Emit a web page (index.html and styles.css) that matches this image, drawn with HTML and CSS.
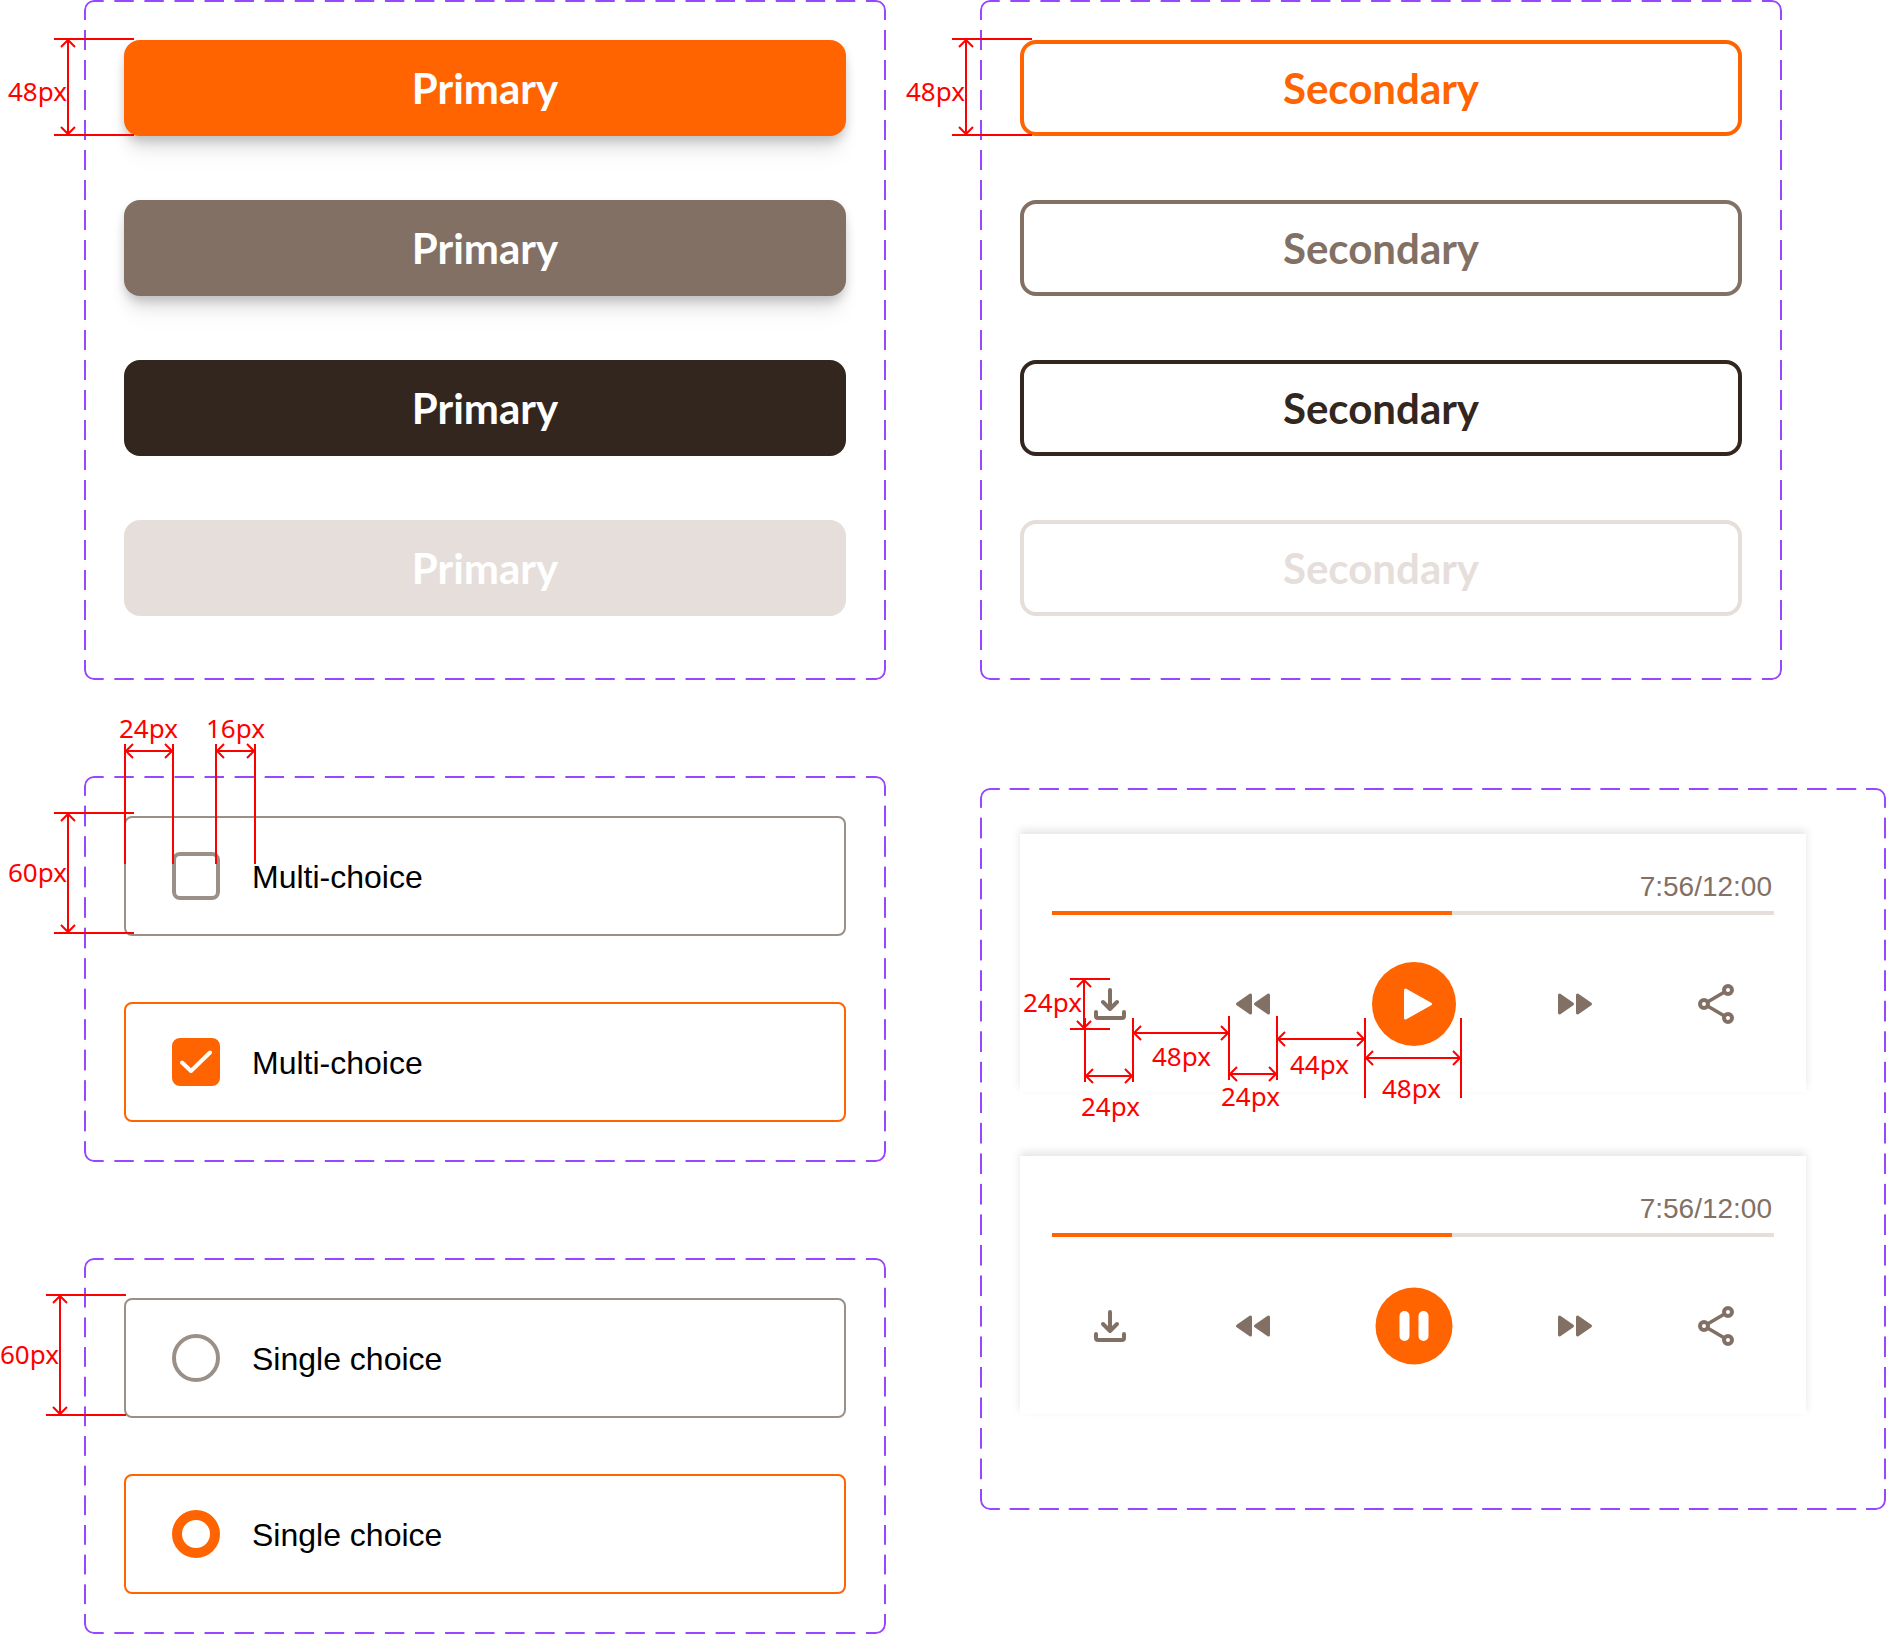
FILE: index.html
```html
<!DOCTYPE html>
<html lang="en">
<head>
<meta charset="utf-8">
<meta name="viewport" content="width=device-width, initial-scale=1">
<title>UI components</title>
<link rel="stylesheet" href="styles.css">
</head>
<body>
<svg class="defs" aria-hidden="true">
  <defs>
    <marker id="arrow" viewBox="-10 -10 12 20" markerWidth="12" markerHeight="20" refX="0" refY="0" markerUnits="userSpaceOnUse" orient="auto-start-reverse">
      <path d="M-8 -7L-1 0L-8 7" fill="none" stroke="#f00" stroke-width="2"/>
    </marker>
    <symbol id="download" viewBox="0 0 48 48">
      <path d="M24 10V28M17 22l7 7 7-7M10 32v4q0 2 2 2h24q2 0 2-2v-4" fill="none" stroke="currentColor" stroke-width="4" stroke-linecap="round" stroke-linejoin="round"/>
    </symbol>
    <symbol id="rewind" viewBox="0 0 48 48">
      <path d="M8.5 24L21.500 15V33ZM26.500 24L39.500 15V33Z" fill="currentColor" stroke="currentColor" stroke-width="3" stroke-linejoin="round"/>
    </symbol>
    <symbol id="forward" viewBox="0 0 48 48">
      <path d="M8.500 15L21.500 24L8.500 33ZM26.500 15L39.500 24L26.500 33Z" fill="currentColor" stroke="currentColor" stroke-width="3" stroke-linejoin="round"/>
    </symbol>
    <symbol id="share" viewBox="0 0 48 48">
      <g fill="none" stroke="currentColor">
        <path d="M13.500 22L30.500 12M13.500 26L30.500 36" stroke-width="3.500"/>
        <circle cx="34" cy="10" r="4" stroke-width="4"/>
        <circle cx="10" cy="24" r="4" stroke-width="4"/>
        <circle cx="34" cy="38" r="4" stroke-width="4"/>
      </g>
    </symbol>
  </defs>
</svg>

<main class="sheet">
  <div class="column">
    <section class="panel panel-buttons" aria-label="Primary buttons">
      <button class="btn btn-orange raised" type="button">Primary</button>
      <button class="btn btn-taupe raised" type="button">Primary</button>
      <button class="btn btn-dark" type="button">Primary</button>
      <button class="btn btn-pale" type="button">Primary</button>
      <svg class="measure">
        <path d="M-30 39H50M-30 135H50"/>
        <path class="arrows" d="M-16 39V135"/>
        <text x="-76" y="101">48px</text>
      </svg>
    </section>

    <section class="panel panel-multi" aria-label="Multi-choice">
      <label class="choice">
        <span class="tick"><input type="checkbox"></span>
        <span class="choice-text">Multi-choice</span>
      </label>
      <label class="choice selected">
        <span class="tick">
          <input type="checkbox" checked>
          <svg viewBox="0 0 48 48" aria-hidden="true"><path d="M10 24.500L19 33L38 14.500" fill="none" stroke="#fff" stroke-width="4" stroke-linecap="round" stroke-linejoin="round"/></svg>
        </span>
        <span class="choice-text">Multi-choice</span>
      </label>
      <svg class="measure">
        <path d="M-30 37H50M-30 157H50M41 -32V88M89 -32V88M132 -32V88M171 -32V88"/>
        <path class="arrows" d="M-16 37V157"/>
        <path class="arrows" d="M41 -25H89"/>
        <path class="arrows" d="M132 -25H171"/>
        <text x="-76" y="106">60px</text>
        <text x="35" y="-38">24px</text>
        <text x="122" y="-38">16px</text>
      </svg>
    </section>

    <section class="panel panel-single" aria-label="Single choice">
      <label class="choice">
        <span class="tick"><input type="radio" name="single-a"></span>
        <span class="choice-text">Single choice</span>
      </label>
      <label class="choice selected">
        <span class="tick"><input type="radio" name="single-b" checked></span>
        <span class="choice-text">Single choice</span>
      </label>
      <svg class="measure">
        <path d="M-38 37H42M-38 157H42"/>
        <path class="arrows" d="M-24 37V157"/>
        <text x="-84" y="106">60px</text>
      </svg>
    </section>
  </div>

  <div class="column column-right">
    <section class="panel panel-buttons panel-inset" aria-label="Secondary buttons">
      <button class="btn line-orange" type="button">Secondary</button>
      <button class="btn line-taupe" type="button">Secondary</button>
      <button class="btn line-dark" type="button">Secondary</button>
      <button class="btn line-pale" type="button">Secondary</button>
      <svg class="measure">
        <path d="M-28 39H52M-28 135H52"/>
        <path class="arrows" d="M-14 39V135"/>
        <text x="-74" y="101">48px</text>
      </svg>
    </section>

    <section class="panel panel-players" aria-label="Audio player">
      <article class="player">
        <div class="time">7:56/12:00</div>
        <progress class="track" value="400" max="722" aria-label="Progress"></progress>
        <div class="controls">
          <button class="icon-btn" type="button" aria-label="Download"><svg><use href="#download"/></svg></button>
          <button class="icon-btn" type="button" aria-label="Rewind"><svg><use href="#rewind"/></svg></button>
          <button class="icon-btn icon-main" type="button" aria-label="Play">
            <svg viewBox="0 0 84 84"><circle cx="42" cy="42" r="42" fill="#ff6400"/><path d="M33.500 28L58.500 42L33.500 56Z" fill="#fff" stroke="#fff" stroke-width="3" stroke-linejoin="round"/></svg>
          </button>
          <button class="icon-btn" type="button" aria-label="Forward"><svg><use href="#forward"/></svg></button>
          <button class="icon-btn" type="button" aria-label="Share"><svg><use href="#share"/></svg></button>
        </div>
        <svg class="measure">
          <path d="M50 145H90M50 195H90M65 184V248M113 184V248M209 182V246M257 182V246M345 184V264M441 184V264"/>
          <path class="arrows" d="M64 145V195"/>
          <path class="arrows" d="M65 242H113"/>
          <path class="arrows" d="M113 199H209"/>
          <path class="arrows" d="M209 240H257"/>
          <path class="arrows" d="M257 205H345"/>
          <path class="arrows" d="M345 224H441"/>
          <text x="3" y="178">24px</text>
          <text x="61" y="282">24px</text>
          <text x="132" y="232">48px</text>
          <text x="201" y="272">24px</text>
          <text x="270" y="240">44px</text>
          <text x="362" y="264">48px</text>
        </svg>
      </article>

      <article class="player">
        <div class="time">7:56/12:00</div>
        <progress class="track" value="400" max="722" aria-label="Progress"></progress>
        <div class="controls">
          <button class="icon-btn" type="button" aria-label="Download"><svg><use href="#download"/></svg></button>
          <button class="icon-btn" type="button" aria-label="Rewind"><svg><use href="#rewind"/></svg></button>
          <button class="icon-btn icon-main" type="button" aria-label="Pause">
            <svg viewBox="0 0 84 84"><circle cx="42" cy="42" r="38.500" fill="#ff6400"/><rect x="27.500" y="27" width="10" height="30" rx="5" fill="#fff"/><rect x="46.500" y="27" width="10" height="30" rx="5" fill="#fff"/></svg>
          </button>
          <button class="icon-btn" type="button" aria-label="Forward"><svg><use href="#forward"/></svg></button>
          <button class="icon-btn" type="button" aria-label="Share"><svg><use href="#share"/></svg></button>
        </div>
      </article>
    </section>
  </div>
</main>
</body>
</html>
```
FILE: styles.css
```css
:root {
  --orange: #ff6400;
  --taupe: #837065;
  --dark: #33261f;
  --pale: #e6dedb;
  --outline: #9a9088;
  --purple: #9747ff;
}

* {
  box-sizing: border-box;
}

body {
  margin: 0;
  background: #fff;
  color: #000;
  font-family: "Liberation Sans", Arial, sans-serif;
}

.defs {
  position: absolute;
  width: 0;
  height: 0;
}

.sheet {
  display: grid;
  grid-template-columns: 802fr 906fr;
  gap: 94px;
  padding-left: 84px;
}

.column {
  display: flex;
  flex-direction: column;
  gap: 96px;
  min-width: 0;
}

.column-right {
  gap: 108px;
}

.panel {
  position: relative;
  display: flex;
  flex-direction: column;
  padding: 40px;
}

/* Dashed outline: each edge starts and ends with a full 20px dash */
.panel::before {
  --across: linear-gradient(90deg, #000 10px, transparent 10px 20px, #000 20px);
  --down: linear-gradient(#000 10px, transparent 10px 20px, #000 20px);
  content: "";
  position: absolute;
  inset: 0;
  padding: 8px;
  border: 2px solid var(--purple);
  border-radius: 10px;
  pointer-events: none;
  mask-image: var(--across), var(--across), var(--down), var(--down);
  mask-size: 30px 10px, 30px 10px, 10px 30px, 10px 30px;
  mask-position: 0 -10px, 0 calc(100% + 10px), -10px 0, calc(100% + 10px) 0;
  mask-repeat: round no-repeat, round no-repeat, no-repeat round, no-repeat round;
  mask-origin: content-box;
  mask-clip: border-box;
}

.panel-buttons {
  gap: 64px;
  padding-bottom: 64px;
}

.panel-inset {
  margin-right: 104px;
}

.panel-multi {
  gap: 66px;
}

.panel-single {
  gap: 56px;
}

.panel-players {
  gap: 64px;
  padding: 46px 80px 96px 40px;
}

.btn {
  height: 96px;
  padding: 0;
  border: 0;
  border-radius: 16px;
  background: #fff;
  color: #fff;
  font: 700 42px/48px Lato, sans-serif;
}

.raised {
  box-shadow: 0 4px 10px rgba(0, 0, 0, 0.12), 0 12px 16px -4px rgba(0, 0, 0, 0.14), 0 24px 24px -4px rgba(0, 0, 0, 0.04);
}

.btn-orange { background: var(--orange); }
.btn-taupe { background: var(--taupe); }
.btn-dark { background: var(--dark); }
.btn-pale { background: var(--pale); }

.line-orange { border: 4px solid; color: var(--orange); }
.line-taupe { border: 4px solid; color: var(--taupe); }
.line-dark { border: 4px solid; color: var(--dark); }
.line-pale { border: 4px solid; color: var(--pale); }

.choice {
  display: flex;
  align-items: center;
  gap: 32px;
  height: 120px;
  padding: 0 46px;
  border: 2px solid var(--outline);
  border-radius: 8px;
  font-size: 32px;
  line-height: 36px;
}

.choice-text {
  padding-top: 2px;
}

.selected {
  border-color: var(--orange);
}

.tick {
  display: grid;
  width: 48px;
  height: 48px;
}

.tick > * {
  grid-area: 1 / 1;
  width: 48px;
  height: 48px;
}

.tick svg {
  pointer-events: none;
}

.tick input {
  appearance: none;
  margin: 0;
  border: 4px solid var(--outline);
  border-radius: 8px;
  background: #fff;
}

.tick input[type="radio"] {
  border-radius: 50%;
}

.tick input:checked {
  border-color: var(--orange);
}

.tick input[type="checkbox"]:checked {
  background: var(--orange);
}

.tick input[type="radio"]:checked {
  border-width: 10px;
}

.player {
  position: relative;
  padding: 37px 32px 46px;
  background: #fff;
  box-shadow: 0 -4px 8px rgba(51, 38, 31, 0.12);
}

.time {
  padding-right: 2px;
  color: var(--taupe);
  font-size: 28px;
  line-height: 32px;
  text-align: right;
}

.track {
  appearance: none;
  display: block;
  width: 100%;
  height: 4px;
  margin: 8px 0 47px;
  border: 0;
  background: var(--pale);
}

.track::-webkit-progress-bar {
  background: var(--pale);
}

.track::-webkit-progress-value {
  background: var(--orange);
}

.controls {
  display: flex;
  align-items: center;
  justify-content: space-between;
  padding: 0 32px 0 34px;
}

.icon-btn {
  width: 48px;
  height: 48px;
  padding: 0;
  border: 0;
  background: none;
  color: var(--taupe);
}

.icon-btn svg {
  display: block;
  width: 100%;
  height: 100%;
}

.icon-main {
  width: 84px;
  height: 84px;
}

/* Red dimension lines laid over the components */
.measure {
  position: absolute;
  top: 0;
  left: 0;
  width: 100%;
  height: 100%;
  overflow: visible;
  pointer-events: none;
}

.measure path {
  fill: none;
  stroke: #f00;
  stroke-width: 2px;
}

.measure .arrows {
  marker-start: url(#arrow);
  marker-end: url(#arrow);
}

.measure text {
  fill: #f00;
  font: 26px "Noto Sans", sans-serif;
}
```
